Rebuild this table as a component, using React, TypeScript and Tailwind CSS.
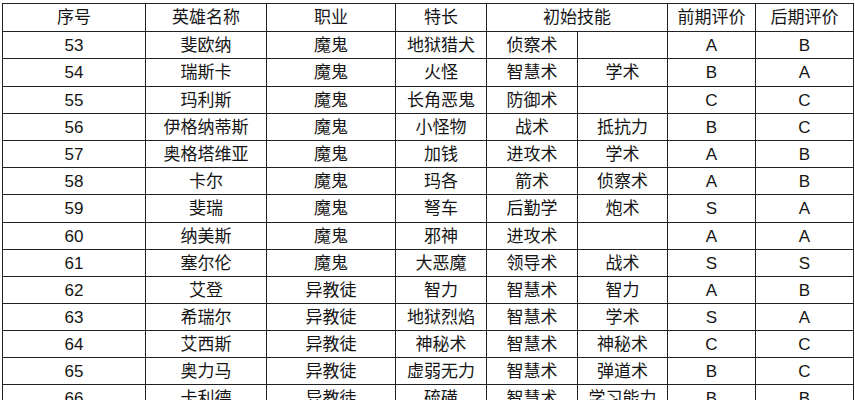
import React from "react";

const widths = ["w-[143px]", "w-[121px]", "w-[129px]", "w-[91px]", "w-[91px]", "w-[90px]", "w-[88px]", "w-[98px]"];

const rows: string[][] = [
  ["53", "斐欧纳", "魔鬼", "地狱猎犬", "侦察术", "", "A", "B"],
  ["54", "瑞斯卡", "魔鬼", "火怪", "智慧术", "学术", "B", "A"],
  ["55", "玛利斯", "魔鬼", "长角恶鬼", "防御术", "", "C", "C"],
  ["56", "伊格纳蒂斯", "魔鬼", "小怪物", "战术", "抵抗力", "B", "C"],
  ["57", "奥格塔维亚", "魔鬼", "加钱", "进攻术", "学术", "A", "B"],
  ["58", "卡尔", "魔鬼", "玛各", "箭术", "侦察术", "A", "B"],
  ["59", "斐瑞", "魔鬼", "弩车", "后勤学", "炮术", "S", "A"],
  ["60", "纳美斯", "魔鬼", "邪神", "进攻术", "", "A", "A"],
  ["61", "塞尔伦", "魔鬼", "大恶魔", "领导术", "战术", "S", "S"],
  ["62", "艾登", "异教徒", "智力", "智慧术", "智力", "A", "B"],
  ["63", "希瑞尔", "异教徒", "地狱烈焰", "智慧术", "学术", "S", "A"],
  ["64", "艾西斯", "异教徒", "神秘术", "智慧术", "神秘术", "C", "C"],
  ["65", "奥力马", "异教徒", "虚弱无力", "智慧术", "弹道术", "B", "C"],
  ["66", "卡利德", "异教徒", "硫磺", "智慧术", "学习能力", "B", "B"],
];

const heights = ["h-[27px]", "h-[28px]", "h-[27px]", "h-[27px]", "h-[27px]", "h-[27px]", "h-[28px]", "h-[27px]", "h-[27px]", "h-[27px]", "h-[27px]", "h-[27px]", "h-[27px]", "h-[27px]"];

const cell = "flex items-center justify-center border-r border-b border-[#222] shrink-0 box-border";

export default function App() {
  return (
    <div
      className="w-[855px] h-[400px] overflow-hidden bg-white text-[#151515] text-[17px] leading-none"
      style={{ fontFamily: '"Liberation Sans", "Noto Sans CJK SC", sans-serif' }}
    >
      <div className="ml-[2px] mt-[3px] w-[852px] border-l border-t border-[#222] flex flex-col">
        <div className="flex h-[28px]">
          <div className={`${cell} ${widths[0]}`}>序号</div>
          <div className={`${cell} ${widths[1]}`}>英雄名称</div>
          <div className={`${cell} ${widths[2]}`}>职业</div>
          <div className={`${cell} ${widths[3]}`}>特长</div>
          <div className={`${cell} w-[181px]`}>初始技能</div>
          <div className={`${cell} ${widths[6]}`}>前期评价</div>
          <div className={`${cell} ${widths[7]}`}>后期评价</div>
        </div>
        {rows.map((r, i) => (
          <div key={i} className={`flex ${heights[i]}`}>
            {r.map((c, j) => (
              <div key={j} className={`${cell} ${widths[j]}`}>
                {c}
              </div>
            ))}
          </div>
        ))}
      </div>
    </div>
  );
}
